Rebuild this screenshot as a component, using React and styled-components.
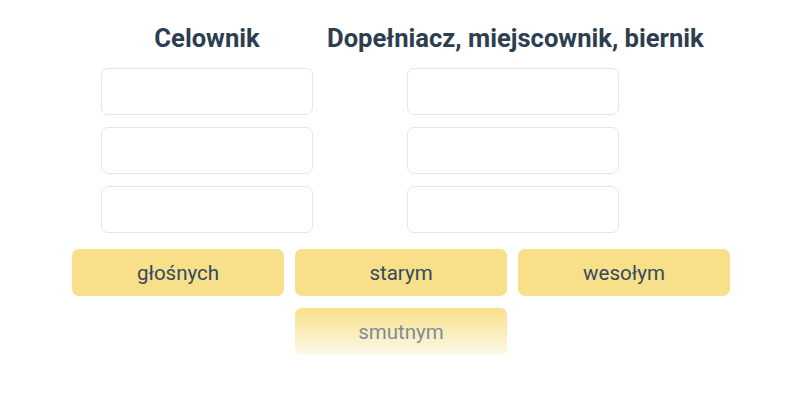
import React from "react";
import styled, { createGlobalStyle } from "styled-components";

const Global = createGlobalStyle`
  html, body { margin: 0; padding: 0; background: #ffffff; }
  body { font-family: Roboto, "Noto Sans", sans-serif; }
`;

const Page = styled.div`
  width: 800px;
  height: 400px;
  box-sizing: border-box;
  padding-top: 20px;
  display: flex;
  flex-direction: column;
`;

const Targets = styled.div`
  display: grid;
  grid-template-columns: repeat(2, 212px);
  column-gap: 94px;
  padding-left: 101px;
`;

const Column = styled.div`
  display: flex;
  flex-direction: column;
  gap: 12px;
`;

const Heading = styled.h2`
  margin: 0 -80px;
  height: 36px;
  line-height: 36px;
  text-align: center;
  white-space: nowrap;
  font-size: 25.6px;
  font-weight: 700;
  color: #2c3e50;
`;

const Slot = styled.div`
  height: 45px;
  border: 1px solid #e3e7ec;
  border-radius: 7px;
  background: #ffffff;
`;

const Bank = styled.div`
  margin-top: 16px;
  padding-left: 72px;
  display: grid;
  grid-template-columns: repeat(3, 212px);
  column-gap: 11px;
  row-gap: 12px;
`;

const Chip = styled.div`
  height: 47px;
  border-radius: 7px;
  display: flex;
  align-items: center;
  justify-content: center;
  font-size: 20.5px;
  color: ${(p) => (p.$fading ? "#7f8c99" : "#34495e")};
  background: ${(p) =>
    p.$fading
      ? "linear-gradient(180deg, #f8e08a 0%, #fbeebd 55%, #fef9ea 100%)"
      : "#f8e08a"};
  grid-column: ${(p) => p.$col || "auto"};
`;

const columns = [
  { title: "Celownik", slots: 3 },
  { title: "Dopełniacz, miejscownik, biernik", slots: 3 },
];

const words = ["głośnych", "starym", "wesołym"];

export default function App() {
  return (
    <>
      <Global />
      <Page>
        <Targets>
          {columns.map((c) => (
            <Column key={c.title}>
              <Heading>{c.title}</Heading>
              {Array.from({ length: c.slots }).map((_, i) => (
                <Slot key={i} />
              ))}
            </Column>
          ))}
        </Targets>
        <Bank>
          {words.map((w) => (
            <Chip key={w}>{w}</Chip>
          ))}
          <Chip $fading $col={2}>
            smutnym
          </Chip>
        </Bank>
      </Page>
    </>
  );
}
